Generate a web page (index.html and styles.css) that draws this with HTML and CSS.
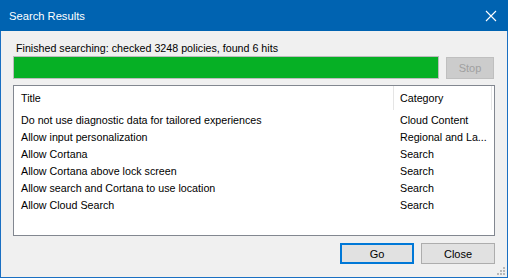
FILE: index.html
```html
<!DOCTYPE html>
<html lang="en">
<head>
    <meta charset="UTF-8">
    <title>Search Results</title>
    <link rel="stylesheet" href="styles.css">
</head>
<body>
    <div class="window">
        <div class="titlebar">
            <span class="title">Search Results</span>
            <span class="close-x">
                <svg width="12" height="12" viewBox="0 0 12 12"><path d="M1 1L11 11M11 1L1 11" stroke="#fff" stroke-width="1.1" fill="none"/></svg>
            </span>
        </div>
        <div class="content">
            <p class="status">Finished searching: checked 3248 policies, found 6 hits</p>
            <div class="progress-row">
                <div class="progress"><div class="progress-fill"></div></div>
                <button class="btn btn-disabled">Stop</button>
            </div>
            <div class="listview">
                <div class="lv-header">
                    <div class="col-title">Title</div>
                    <div class="col-cat">Category</div>
                </div>
                <div class="lv-row"><div class="col-title">Do not use diagnostic data for tailored experiences</div><div class="col-cat">Cloud Content</div></div>
                <div class="lv-row"><div class="col-title">Allow input personalization</div><div class="col-cat">Regional and La...</div></div>
                <div class="lv-row"><div class="col-title">Allow Cortana</div><div class="col-cat">Search</div></div>
                <div class="lv-row"><div class="col-title">Allow Cortana above lock screen</div><div class="col-cat">Search</div></div>
                <div class="lv-row"><div class="col-title">Allow search and Cortana to use location</div><div class="col-cat">Search</div></div>
                <div class="lv-row"><div class="col-title">Allow Cloud Search</div><div class="col-cat">Search</div></div>
            </div>
            <div class="buttons">
                <button class="btn btn-default">Go</button>
                <button class="btn">Close</button>
            </div>
        </div>
        <div class="grip">
            <svg width="10" height="10" viewBox="0 0 10 10" fill="#b8b8b8">
                <rect x="7" y="1" width="2" height="2"/>
                <rect x="4" y="4" width="2" height="2"/><rect x="7" y="4" width="2" height="2"/>
                <rect x="1" y="7" width="2" height="2"/><rect x="4" y="7" width="2" height="2"/><rect x="7" y="7" width="2" height="2"/>
            </svg>
        </div>
    </div>
</body>
</html>
```

FILE: styles.css
```css
body {
    margin: 0;
    font-family: "Liberation Sans", Arial, sans-serif;
    font-size: 10.7px;
    color: #000;
}
.window {
    position: relative;
    width: 508px;
    height: 278px;
    box-sizing: border-box;
    background: #f0f0f0;
    border: 1px solid #1a6fc2;
    border-top: none;
    display: flex;
    flex-direction: column;
}
.titlebar {
    height: 31px;
    margin: 0 -1px;
    background: #0063b1;
    color: white;
    display: flex;
    align-items: center;
    justify-content: space-between;
    padding: 0 11px 0 9px;
}
.title {
    font-size: 11.2px;
}
.close-x {
    display: flex;
}
.content {
    padding: 0 12px;
    flex: 1;
    display: flex;
    flex-direction: column;
}
.status {
    margin: 9px 0 0 3px;
    height: 16px;
    line-height: 16px;
}
.progress-row {
    display: flex;
    align-items: center;
    height: 23px;
}
.progress {
    width: 424px;
    height: 21px;
    border: 1px solid #bcbcbc;
    background: #e6e6e6;
}
.progress-fill {
    width: 100%;
    height: 100%;
    background: #06b025;
}
.btn {
    font-family: "Liberation Sans", Arial, sans-serif;
    font-size: 11px;
    width: 74px;
    height: 21px;
    padding: 0;
    background: #e1e1e1;
    border: 1px solid #adadad;
    color: #000;
}
.progress-row .btn {
    margin-left: 7px;
    width: 48px;
    height: 22px;
}
.btn-disabled {
    background: #cccccc;
    border-color: #bfbfbf;
    color: #a0a0a0;
}
.btn-default {
    border: 2px solid #0078d7;
}
.listview {
    margin-top: 6px;
    height: 151px;
    box-sizing: border-box;
    border: 1px solid #828790;
    background: #fff;
}
.lv-header, .lv-row {
    display: flex;
}
.lv-header {
    height: 24px;
    align-items: center;
    margin-bottom: 2px;
}
.lv-header .col-cat {
    border-left: 1px solid #e5e5e5;
    border-right: 1px solid #e5e5e5;
    height: 100%;
    display: flex;
    align-items: center;
    padding-left: 6px;
    width: 91px;
}
.lv-row {
    height: 17px;
    line-height: 17px;
}
.col-title {
    width: 372px;
    padding-left: 7px;
    white-space: nowrap;
    overflow: hidden;
}
.lv-row .col-cat {
    padding-left: 7px;
    white-space: nowrap;
}
.buttons {
    display: flex;
    justify-content: flex-end;
    gap: 7px;
    margin-top: 7px;
}
.grip {
    position: absolute;
    right: 1px;
    bottom: 1px;
    display: flex;
}
```
